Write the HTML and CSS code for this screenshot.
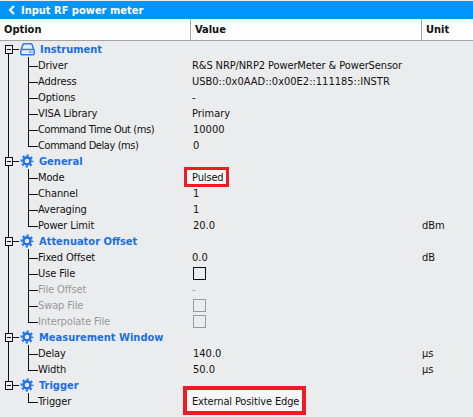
FILE: index.html
```html
<!DOCTYPE html>
<html lang="en">
<head>
<meta charset="utf-8">
<title>Input RF power meter</title>
<link rel="stylesheet" href="styles.css">
</head>
<body>
<svg class="defs" width="0" height="0" aria-hidden="true"><defs>
<symbol id="gear" viewBox="0 0 14 14"><g fill="none" stroke="#1a73e8"><circle cx="7" cy="7" r="3.500" stroke-width="2.500"/><circle cx="7" cy="7" r="5.500" stroke-width="2" stroke-dasharray="2.160 2.160" stroke-dashoffset="1.080"/></g></symbol>
</defs></svg>
<main class="panel">
  <header class="titlebar">
    <svg class="back" width="8" height="10" viewBox="0 0 8 10"><path d="M6 1 2 5l4 4" fill="none" stroke="#fff" stroke-width="2.200"/></svg>
    <span>Input RF power meter</span>
  </header>
  <div class="columns">
    <div class="col">Option</div>
    <div class="col">Value</div>
    <div class="col">Unit</div>
  </div>
  <div class="tree">
    <section class="group">
      <div class="row head">
        <span class="toggle"></span>
        <svg class="icon" width="15" height="13" viewBox="0 0 15 13"><path d="M.8 7.500 3 1.500Q3.300.700 4.200.700h6.600q.9 0 1.200.8l2.200 6M1.800 6.500h11.400q1 0 1 1v3.300q0 1-1 1H1.800q-1 0-1-1V7.500q0-1 1-1z" fill="none" stroke="#2b7de9" stroke-width="1.500"/><path d="M9 9.200h2.500M12.500 9.200h.6" stroke="#2b7de9" stroke-width="1.300"/></svg>
        <span class="name">Instrument</span>
      </div>
      <div class="row child"><span class="label">Driver</span><span class="value snug">R&amp;S NRP/NRP2 PowerMeter &amp; PowerSensor</span><span></span></div>
      <div class="row child"><span class="label">Address</span><span class="value">USB0::0x0AAD::0x00E2::111185::INSTR</span><span></span></div>
      <div class="row child"><span class="label">Options</span><span class="value">-</span><span></span></div>
      <div class="row child"><span class="label">VISA Library</span><span class="value">Primary</span><span></span></div>
      <div class="row child"><span class="label tight">Command Time Out (ms)</span><span class="value num">10000</span><span></span></div>
      <div class="row child"><span class="label tight">Command Delay (ms)</span><span class="value num">0</span><span></span></div>
    </section>
    <section class="group">
      <div class="row head">
        <span class="toggle"></span>
        <svg class="icon" width="14" height="14"><use href="#gear"/></svg>
        <span class="name">General</span>
      </div>
      <div class="row child"><span class="label">Mode</span><span class="value marked"><span class="mark mark-small"></span>Pulsed</span><span></span></div>
      <div class="row child"><span class="label">Channel</span><span class="value num">1</span><span></span></div>
      <div class="row child"><span class="label">Averaging</span><span class="value num">1</span><span></span></div>
      <div class="row child"><span class="label">Power Limit</span><span class="value num">20.0</span><span class="unit">dBm</span></div>
    </section>
    <section class="group">
      <div class="row head">
        <span class="toggle"></span>
        <svg class="icon" width="14" height="14"><use href="#gear"/></svg>
        <span class="name">Attenuator Offset</span>
      </div>
      <div class="row child"><span class="label">Fixed Offset</span><span class="value">0.0</span><span class="unit">dB</span></div>
      <div class="row child"><span class="label">Use File</span><span class="value"><span class="check"></span></span><span></span></div>
      <div class="row child off"><span class="label">File Offset</span><span class="value">-</span><span></span></div>
      <div class="row child off"><span class="label">Swap File</span><span class="value"><span class="check"></span></span><span></span></div>
      <div class="row child off"><span class="label">Interpolate File</span><span class="value"><span class="check"></span></span><span></span></div>
    </section>
    <section class="group">
      <div class="row head">
        <span class="toggle"></span>
        <svg class="icon" width="14" height="14"><use href="#gear"/></svg>
        <span class="name">Measurement Window</span>
      </div>
      <div class="row child"><span class="label">Delay</span><span class="value num">140.0</span><span class="unit">µs</span></div>
      <div class="row child"><span class="label">Width</span><span class="value num">50.0</span><span class="unit">µs</span></div>
    </section>
    <section class="group">
      <div class="row head">
        <span class="toggle"></span>
        <svg class="icon" width="14" height="14"><use href="#gear"/></svg>
        <span class="name">Trigger</span>
      </div>
      <div class="row child"><span class="label">Trigger</span><span class="value marked"><span class="mark mark-large"></span>External Positive Edge</span><span></span></div>
    </section>
  </div>
</main>
</body>
</html>
```
FILE: styles.css
```css
* { box-sizing: border-box; }
html, body { margin: 0; height: 100%; }
body {
  background: #ebecee;
  overflow: hidden;
  font-family: "DejaVu Sans", sans-serif;
  font-stretch: condensed;
  font-size: 11px;
  color: #111;
}
.defs { display: block; }
.panel { display: flex; flex-direction: column; padding-top: 1px; height: 100%; background: #ebecee; }
.titlebar {
  height: 18px;
  background: #0094ff;
  color: #fff;
  display: flex;
  align-items: center;
  gap: 5px;
  padding-left: 8px;
  font-weight: 700;
  font-size: 11px;
  white-space: nowrap;
}
.columns {
  display: grid;
  grid-template-columns: 191px 231px 51px;
  height: 22px;
  background: #fdfdfe;
  border-bottom: 1px solid #a3a3a3;
  font-weight: 700;
  font-size: 11px;
}
.col { display: flex; align-items: center; padding-left: 4px; }
.col + .col { border-left: 1px solid #a3a3a3; margin-left: -1px; padding-left: 4px; }
.tree { display: flex; flex-direction: column; }
.group { position: relative; }
.group:not(:last-child)::before {
  content: "";
  position: absolute;
  left: 8px;
  top: 12px;
  bottom: -4px;
  width: 1px;
  background: #111;
}
.row { height: 16px; display: grid; align-items: start; position: relative; }
.head { display: flex; align-items: center; }
.toggle {
  position: relative;
  width: 8px;
  height: 9px;
  margin-left: 5px;
  border: 1px solid #111;
  background: #ebecee;
  z-index: 1;
  flex: none;
}
.toggle::before {
  content: "";
  position: absolute;
  left: 1px;
  right: 1px;
  top: 3px;
  height: 1px;
  background: #111;
}
.toggle::after {
  content: "";
  position: absolute;
  left: 6px;
  width: 7px;
  top: 3px;
  height: 1px;
  background: #111;
}
.icon { flex: none; margin-left: 7px; }
.name {
  margin-left: 5px;
  font-weight: 700;
  font-size: 11px;
  color: #1a6fe8;
  white-space: nowrap;
}
.child { padding-left: 38px; grid-template-columns: 154px 230px 51px; }
.child::before {
  content: "";
  position: absolute;
  left: 28px;
  top: 0;
  width: 9px;
  height: 9px;
  border-left: 1px solid #111;
  border-bottom: 1px solid #111;
}
.child:not(:last-child)::after {
  content: "";
  position: absolute;
  left: 28px;
  top: 8px;
  height: 8px;
  width: 1px;
  background: #111;
}
.label, .value, .unit {
  white-space: nowrap;
  line-height: 18px;
}
.label { letter-spacing: -0.120px; }
.tight { letter-spacing: -0.420px; }
.snug { letter-spacing: -0.100px; }
.num { padding-left: 1px; }
.off { color: #999; }
.value { position: relative; display: block; }
.check {
  display: block;
  width: 13px;
  height: 13px;
  margin: 2px 0 0 1px;
  border: 1px solid #111;
}
.off .check { border-color: #999; }
.mark { position: absolute; border-style: solid; border-color: #ed1c24; background: #f5f6f7; z-index: -1; }
.marked { z-index: 0; letter-spacing: -0.140px; }
.mark-small { left: -8px; top: -2px; width: 45px; height: 20px; border-width: 3px; }
.mark-large { left: -9px; top: -7px; width: 123px; height: 29px; border-width: 4px; }
```
